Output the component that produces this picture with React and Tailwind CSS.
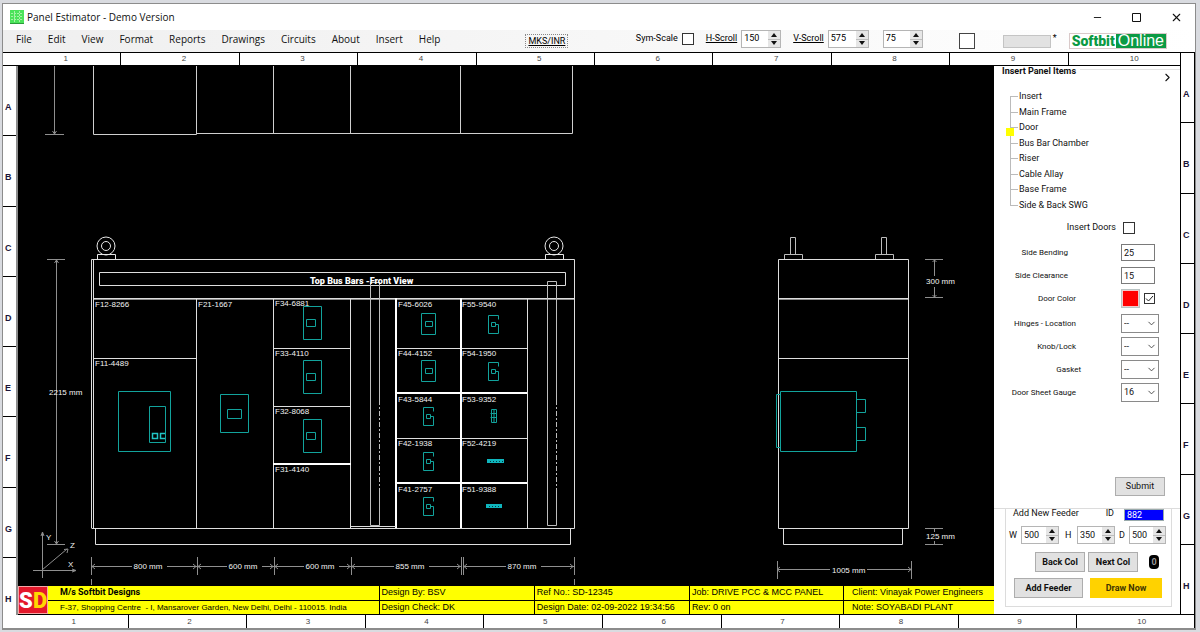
import React, { useState } from 'react';
import { ChevronDown, ChevronRight, Minus, X } from 'lucide-react';

const menuItems = ['File', 'Edit', 'View', 'Format', 'Reports', 'Drawings', 'Circuits', 'About', 'Insert', 'Help'];
const columns = [1, 2, 3, 4, 5, 6, 7, 8, 9, 10];
const rows = ['A', 'B', 'C', 'D', 'E', 'F', 'G', 'H'];
const treeItems = ['Insert', 'Main Frame', 'Door', 'Bus Bar Chamber', 'Riser', 'Cable Allay', 'Base Frame', 'Side & Back SWG'];

// Feeder labels on the front view
const feeders = [
  ['F12-8266', 95, 307],
  ['F11-4489', 95, 366],
  ['F21-1667', 198, 307],
  ['F34-6881', 275, 306],
  ['F33-4110', 275, 356],
  ['F32-8068', 275, 414],
  ['F31-4140', 275, 472],
  ['F45-6026', 398, 307],
  ['F44-4152', 398, 356],
  ['F43-5844', 398, 402],
  ['F42-1938', 398, 446],
  ['F41-2757', 398, 492],
  ['F55-9540', 462, 307],
  ['F54-1950', 462, 356],
  ['F53-9352', 462, 402],
  ['F52-4219', 462, 446],
  ['F51-9388', 462, 492],
];

const bottomDims = [
  ['800 mm', 91, 197, 148],
  ['600 mm', 197, 274, 243],
  ['600 mm', 274, 351, 320],
  ['855 mm', 351, 461, 410],
  ['870 mm', 463, 574, 522],
];

function Spinner({ id, value, className = '' }) {
  return (
    <div className={`flex h-[18px] items-stretch border border-[#b5b5b5] bg-white ${className}`}>
      <input
        id={id}
        aria-label={id}
        type="text"
        inputMode="numeric"
        defaultValue={value}
        className="w-full min-w-0 flex-1 bg-transparent pl-0.5 text-[9px] outline-none"
      />
      <div className="flex w-3 flex-col bg-[#e6e6e6]">
        <button type="button" aria-label="Increase" className="flex flex-1 items-center justify-center border-b border-[#bdbdbd]">
          <svg width="6" height="4" viewBox="0 0 6 4"><path d="M0 4 3 0l3 4z" fill="#111" /></svg>
        </button>
        <button type="button" aria-label="Decrease" className="flex flex-1 items-center justify-center">
          <svg width="6" height="4" viewBox="0 0 6 4"><path d="M0 0h6L3 4z" fill="#111" /></svg>
        </button>
      </div>
    </div>
  );
}

function SelectBox({ id, options }) {
  return (
    <div className="grid w-[38px] items-center">
      <select
        id={id}
        className="col-start-1 row-start-1 h-[19px] w-full appearance-none border border-[#8a8a8a] bg-white pl-0.5 text-[9px] outline-none"
      >
        {options.map((option) => (
          <option key={option}>{option}</option>
        ))}
      </select>
      <ChevronDown size={11} strokeWidth={2} className="pointer-events-none col-start-1 row-start-1 mr-0.5 justify-self-end text-[#444]" />
    </div>
  );
}

function FormRow({ id, label, labelClass, children }) {
  return (
    <div className="flex h-[23px] items-center">
      <label htmlFor={id} className={`w-[127px] whitespace-nowrap text-right text-[8px] ${labelClass}`}>{label}</label>
      {children}
    </div>
  );
}

function TitleBar() {
  return (
    <header className="flex h-[26px] items-center bg-white pl-[7px]">
      <svg width="14" height="14" viewBox="0 0 14 14">
        <rect width="14" height="14" fill="#4be35a" />
        <path d="M1 3.5h12M1 6.5h12M1 9.5h12M4.5 1v12M9.5 1v12" stroke="#a5f2a5" strokeDasharray="2 1" />
        <path d="M0 13.5h14" stroke="#2b9a3a" />
      </svg>
      <h1 className="ml-[3px] font-['Open_Sans',sans-serif] text-[10px] text-[#111]">Panel Estimator - Demo Version</h1>
      <div className="ml-auto flex items-center gap-7 pr-3 text-[#111]">
        <button type="button" aria-label="Minimize"><Minus size={11} strokeWidth={2} /></button>
        <button type="button" aria-label="Maximize">
          <svg width="11" height="11" viewBox="0 0 11 11"><path d="M1.5 1.5h8v8h-8z" fill="none" stroke="currentColor" /></svg>
        </button>
        <button type="button" aria-label="Close"><X size={13} strokeWidth={2} /></button>
      </div>
    </header>
  );
}

function Toolbar() {
  return (
    <div className="flex h-[22px] items-center bg-gradient-to-r from-[#efefef] to-white pb-1 pl-[13px] pr-7">
      <nav className="flex gap-4 font-['Open_Sans',sans-serif] text-[10px] text-[#111]">
        {menuItems.map((item) => (
          <button type="button" key={item}>{item}</button>
        ))}
      </nav>
      <button type="button" className="ml-[85px] mt-1 h-[14px] border border-dotted border-[#888] px-0.5 font-['Roboto',sans-serif] text-[9px] leading-[12px] underline">MKS/INR</button>
      <div className="ml-auto flex items-center whitespace-nowrap font-['Roboto',sans-serif] text-[9px]">
        <label htmlFor="sym-scale">Sym-Scale</label>
        <input id="sym-scale" type="checkbox" className="ml-1 size-3 appearance-none border border-[#333] bg-white" />
        <label htmlFor="h-scroll" className="ml-3 underline">H-Scroll</label>
        <Spinner id="h-scroll" value="150" className="ml-1 w-10" />
        <label htmlFor="v-scroll" className="ml-3 underline">V-Scroll</label>
        <Spinner id="v-scroll" value="575" className="ml-1 w-[41px]" />
        <Spinner id="zoom" value="75" className="ml-3.5 w-10" />
        <input aria-label="Show grid" type="checkbox" className="ml-9 mt-1 size-4 appearance-none border border-[#444] bg-white" />
        <input aria-label="Code" type="text" className="ml-7 mt-1 h-[13px] w-12 border border-[#c4c4c4] bg-[#e2e2e2]" />
        <span className="ml-0.5">*</span>
        <a href="#softbit" className="ml-3 mt-1 flex h-4 items-center border border-[#d9c9c9] bg-white text-[14px] leading-none">
          <span className="pl-0.5 pr-px font-black text-[#0b9a44]">Softbit</span>
          <span className="flex h-full items-center bg-[#0b9a44] px-0.5 font-['Liberation_Sans',sans-serif] text-[16px] text-white">Online</span>
        </a>
      </div>
    </div>
  );
}

function Eyebolt({ x }) {
  return (
    <g fill="none" stroke="#e8e8e8">
      <circle cx={x} cy="246" r="9" />
      <circle cx={x} cy="246" r="4.5" />
      <path d={`M${x - 8.5} 259v-4.5h18v4.5`} />
    </g>
  );
}

function Drawing() {
  return (
    <svg className="block min-h-0 w-full flex-1 bg-black" fontSize="8" fill="#f2f2f2">
      <g transform="translate(-18 -66)">
        {/* Top view */}
        <g fill="none" stroke="#cfcfcf">
          <path d="M93.5 65V134.5H196.5V65M196.5 133.5H572.5V65M273.5 65V134M350.5 65V134M460.5 65V134" />
          <path d="M54.5 65V134M45 134.5H64" stroke="#8f8f8f" />
          <path d="m52.5 131 2 3 2-3" stroke="#8f8f8f" />
        </g>

        {/* Front view */}
        <Eyebolt x={106} />
        <Eyebolt x={554} />
        <g fill="none" stroke="#dedede">
          <path d="M91.5 528V259.5H574.5V528.5H91.5M93.5 259V528" />
          <path d="M99.5 272.5H565.5V285.5H99.5zM94 298.5H574" />
          <path d="M94 299.5H574" stroke="#8a8a8a" />
          <path d="M95.5 528V544.5H570.5V528" />
          <path d="M196.5 299V528M273.5 298V528M350.5 298V528M527.5 299V528M94 358.5H196M273 348.5H351M273 406.5H351M396 348.5H527M396 438.5H527" />
          <path d="M396 298V528M461 298V528M273 464H351M396 393H527M396 483H527" stroke="#fff" strokeWidth="2" />
          <path d="M351 526.5H396" />
          <path d="M379.5 400V282.5H370.5V525.5H379.5V488M556.5 400V281.5H547.5V525.5H556.5V488" stroke="#bdbdbd" />
          <path d="M379.5 400V488M556.5 400V488" stroke="#bdbdbd" strokeDasharray="5 2 2 2" />
        </g>
        <text x="310" y="284" fontSize="9" fill="#fff" className="font-['Roboto',sans-serif] font-black">Top Bus Bars -Front View</text>
        {feeders.map(([name, x, y]) => (
          <text key={name} x={x} y={y}>{name}</text>
        ))}

        {/* Switchgear */}
        <g fill="none" stroke="#12a39c">
          <path d="M118.5 391.5H170.5V451.5H118.5zM149.5 406.5H165.5V442.5H149.5z" />
          <path d="M152.5 433.5h5v5h-5zM165 433.5h-4.5v5h4.5" stroke="#22c4c4" strokeWidth="1.5" />
          <path d="M220.5 394.5H248.5V432.5H220.5zM227.5 409.5H241.5V418.5H227.5z" />
          {[306.5, 360.5, 419.5].map((y) => (
            <path key={y} d={`M303.5 ${y}h18v33h-18zM306.5 ${y + 13}h9v7h-9z`} />
          ))}
          {[313.5, 360.5].map((y) => (
            <path key={y} d={`M421.5 ${y}h14v21h-14zM425.5 ${y + 8}h7v5h-7z`} />
          ))}
          {[[423.5, 407.5], [423.5, 452.5], [423.5, 497.5], [488.5, 315.5], [488.5, 362.5]].map(([x, y]) => (
            <path key={`${x}-${y}`} d={`M${x + 10} ${y + 4}v-4h-10v18h10v-9h-3M${x + 7} ${y + 7}h-4v4h4z`} />
          ))}
          <path d="M491.5 409.5h5v13h-5zM494 409v13M490.5 413.5h6M490.5 417.5h6" />
          <path d="M487 461H504M486 506H502" stroke="#0fb5bd" strokeWidth="4" />
          <path d="M490 461.5h13M489 506.5h12" stroke="#063c40" strokeDasharray="1 2" />
        </g>

        {/* Side view */}
        <g fill="none" stroke="#dedede">
          <path d="M778.5 259.5H908.5V528.5H778.5zM779 298.5H908M779 358.5H908M783.5 528V544.5H902.5V528" />
          <path d="M779 299.5H908" stroke="#8a8a8a" />
          <path d="M784.5 259V254.5H802.5V259M790.5 254V237.5H795.5V254M875.5 259V254.5H893.5V259M881.5 254V237.5H886.5V254" stroke="#bdbdbd" />
        </g>
        <g fill="none" stroke="#12a39c">
          <path d="M780.5 391.5H856.5V451.5H780.5zM856 399.5H865.5V412.5H856M856 427.5H865.5V440.5H856" />
          <path d="M780 394.5H776.5V447.5H780" />
        </g>

        {/* Dimension lines */}
        <g fill="none" stroke="#8f8f8f">
          <path d="M56.5 260V544M47 259.5H65M47 544.5H65M54.5 541l2 3 2-3M54.5 263l2-3 2 3" />
          <path d="M934.5 260V276M934.5 287V297M925 259.5H943M925 297.5H943M925 528.5H943M925 544.5H943M934.5 529v3M934.5 541v3" />
          <path d="m932.5 262 2-2 2 2m-4 33 2 2 2-2" />
          <path d="M777 569.5H830M867 569.5H911M777.5 561V579M911.5 561V579" />
          <path d="m780 567-3 2.5 3 2.5m128-5 3 2.5-3 2.5" />
          <path d="M91.5 557V575M197.5 557V575M274.5 557V575M351.5 557V575M461.5 557V575M463.5 557V575M574.5 557V575M91.5 579V586M574.5 579V586" />
          {bottomDims.map(([, from, to, mid]) => (
            <path key={from} d={`M${from} 566.5H${mid - 16}M${mid + 19} 566.5H${to}M${from + 4} 564l-3 2.5 3 2.5M${to - 4} 564l3 2.5-3 2.5`} />
          ))}
          <path d="M42.5 533V578M33 570.5H75M42 570 67 549M41 536l1.5-4 1.5 4M72 569l4 1.5-4 1.5M64 549.5l4-.5-1 4" />
          <path d="M286 585.5H302" strokeDasharray="3 2" />
        </g>
        {bottomDims.map(([name, from, , mid]) => (
          <text key={from} x={mid} y="569" textAnchor="middle">{name}</text>
        ))}
        <text x="49" y="395">2215 mm</text>
        <text x="926" y="284">300 mm</text>
        <text x="926" y="539">125 mm</text>
        <text x="832" y="573">1005 mm</text>
        <text x="46" y="540">Y</text>
        <text x="70" y="548">Z</text>
        <text x="68" y="567">X</text>
      </g>
    </svg>
  );
}

function TitleBlock() {
  return (
    <div className="flex h-[30px] border-y border-black bg-[#ffff00] text-[9px]">
      <svg width="30" height="28" viewBox="0 0 30 28" className="shrink-0 font-['Roboto',sans-serif] font-black">
        <rect width="30" height="28" fill="#f7a6a6" />
        <rect x="1" y="1" width="28" height="26" fill="#e3182b" />
        <text x="1" y="22" fontSize="22" fill="#fff">S</text>
        <text x="15" y="22" fontSize="22" fill="#ffd800">D</text>
      </svg>
      <table className="w-full table-fixed whitespace-nowrap text-left leading-[13px]">
        <colgroup>
          <col className="w-[35%]" />
          <col className="w-[16.4%]" />
          <col className="w-[16.4%]" />
          <col className="w-[16.3%]" />
          <col />
        </colgroup>
        <tbody>
          <tr className="border-b border-black">
            <th className="pl-3 font-['Roboto',sans-serif] font-bold">M/s Softbit Designs</th>
            <td className="border-l border-black pl-0.5">Design By: BSV</td>
            <td className="border-l border-black pl-0.5">Ref No.: SD-12345</td>
            <td className="border-l border-black pl-0.5">Job: DRIVE PCC &amp; MCC PANEL</td>
            <td className="border-l border-black pl-2">Client: Vinayak Power Engineers</td>
          </tr>
          <tr>
            <td className="pl-3 text-[8px]">F-37, Shopping Centre &nbsp;- I, Mansarover Garden, New Delhi, Delhi - 110015. India</td>
            <td className="border-l border-black pl-0.5">Design Check: DK</td>
            <td className="border-l border-black pl-0.5">Design Date: 02-09-2022 19:34:56</td>
            <td className="border-l border-black pl-0.5">Rev: 0 on</td>
            <td className="border-l border-black pl-2">Note: SOYABADI PLANT</td>
          </tr>
        </tbody>
      </table>
    </div>
  );
}

function FeederPanel() {
  return (
    <section className="border-t border-[#dcdcdc] pl-[11px] pr-2">
      <div className="border-x border-b border-[#dcdcdc] pb-2 text-[9px]">
        <div className="flex h-[13px] items-start overflow-hidden pl-[7px] pr-[7px] leading-[9px]">
          <span>Add New Feeder</span>
          <label htmlFor="feeder-id" className="ml-auto">ID</label>
          <input id="feeder-id" defaultValue="882" className="ml-2.5 h-3 w-10 border border-[#9aa] bg-[#0000ff] pl-0.5 text-[9px] leading-[9px] text-white" />
        </div>
        <div className="mt-1 flex items-center pl-[3px]">
          <label htmlFor="width" className="w-3">W</label>
          <Spinner id="width" value="500" className="w-[38px]" />
          <label htmlFor="height" className="ml-1.5 w-3">H</label>
          <Spinner id="height" value="350" className="w-[38px]" />
          <label htmlFor="depth" className="ml-1 w-2.5">D</label>
          <Spinner id="depth" value="500" className="w-[37px]" />
        </div>
        <div className="mt-2 flex items-center gap-[3px] pl-[29px] font-bold">
          <button type="button" className="h-5 w-[50px] whitespace-nowrap border border-[#adadad] bg-[#e1e1e1]">Back Col</button>
          <button type="button" className="h-5 w-[50px] whitespace-nowrap border border-[#adadad] bg-[#e1e1e1]">Next Col</button>
          <span className="ml-2 flex h-3.5 w-2.5 items-center justify-center rounded bg-black text-[#999]">0</span>
        </div>
        <div className="mt-1.5 flex items-center gap-[7px] pl-2 font-bold">
          <button type="button" className="h-5 w-[69px] border border-[#adadad] bg-[#e1e1e1]">Add Feeder</button>
          <button type="button" className="h-5 w-[72px] bg-[#ffd200] text-[#3f3500]">Draw Now</button>
        </div>
      </div>
    </section>
  );
}

function SidePanel() {
  const [selected, setSelected] = useState('Door');

  return (
    <aside className="flex min-h-0 flex-col border-b border-black bg-white pb-[7px] font-['Roboto',sans-serif] text-[9px] text-[#111]">
      <div className="flex h-[11px] items-center gap-1 pl-2">
        <h2 className="font-bold">Insert Panel Items</h2>
        <span className="mb-1 flex-1 border-t border-[#e4e4e4]" />
      </div>
      <button type="button" aria-label="Collapse panel" className="-mt-1.5 mr-1.5 self-end">
        <ChevronRight size={13} strokeWidth={2} />
      </button>

      <ul className="ml-4 mt-[5px] grid h-[124px] grid-rows-8">
        {treeItems.map((item) => (
          <li key={item} className="group relative flex items-center">
            <span className="h-full w-2 border-l border-[#bbb] group-first:h-1/2 group-first:self-end group-last:h-1/2 group-last:self-start" />
            <span className="-ml-2 mr-px w-2 border-t border-[#bbb]" />
            {item === selected && <span className="absolute -left-1 top-2 size-2 bg-[#ffff00]" />}
            <button type="button" onClick={() => setSelected(item)}>{item}</button>
          </li>
        ))}
      </ul>

      <form className="flex flex-1 flex-col" onSubmit={(e) => e.preventDefault()}>
        <div className="mt-[3px] mb-0.5 flex h-[23px] items-center">
          <label htmlFor="insert-doors" className="w-[122px] text-right">Insert Doors</label>
          <input id="insert-doors" type="checkbox" className="ml-[7px] size-3 appearance-none border border-[#333]" />
        </div>
        <FormRow id="side-bending" label="Side Bending" labelClass="pr-[53px]">
          <input id="side-bending" defaultValue="25" className="h-[17px] w-[34px] border border-[#7a7a7a] pl-0.5" />
        </FormRow>
        <FormRow id="side-clearance" label="Side Clearance" labelClass="pr-[53px]">
          <input id="side-clearance" defaultValue="15" className="h-[17px] w-[34px] border border-[#7a7a7a] pl-0.5" />
        </FormRow>
        <FormRow id="door-color" label="Door Color" labelClass="pr-[45px]">
          <button type="button" aria-label="Pick color" className="size-[19px] border border-[#b9c4c4] bg-[#ff0000] outline-1 -outline-offset-2 outline-[#f3c9c9]" />
          <span className="ml-1 grid size-[11px] items-center justify-items-center">
            <input id="door-color" type="checkbox" defaultChecked className="col-start-1 row-start-1 size-[11px] appearance-none border border-[#333]" />
            <svg width="9" height="9" viewBox="0 0 9 9" className="pointer-events-none col-start-1 row-start-1">
              <path d="m1 4.5 2.5 2.5L8 2" fill="none" stroke="#222" />
            </svg>
          </span>
        </FormRow>
        <div className="mt-0.5">
          <FormRow id="hinges" label="Hinges - Location" labelClass="pr-[45px]">
            <SelectBox id="hinges" options={['--', 'Left', 'Right']} />
          </FormRow>
          <FormRow id="knob" label="Knob/Lock" labelClass="pr-[45px]">
            <SelectBox id="knob" options={['--', 'Knob', 'Lock']} />
          </FormRow>
          <FormRow id="gasket" label="Gasket" labelClass="pr-10">
            <SelectBox id="gasket" options={['--', 'Yes', 'No']} />
          </FormRow>
          <FormRow id="gauge" label="Door Sheet Gauge" labelClass="pr-[45px]">
            <SelectBox id="gauge" options={['16', '14', '18']} />
          </FormRow>
        </div>
        <button type="submit" className="mb-3 mr-[15px] mt-auto h-[19px] w-[50px] self-end border border-[#adadad] bg-[#e1e1e1]">Submit</button>
      </form>

      <FeederPanel />
    </aside>
  );
}

export default function App() {
  return (
    <div className="flex h-screen flex-col bg-[#d9dbe0] pb-0.5 pl-0.5 pr-1 pt-[3px] font-['Liberation_Sans',Arial,sans-serif] text-black">
      <div className="flex min-h-0 flex-1 flex-col border border-b-2 border-[#8c8c8c] bg-white">
        <TitleBar />
        <Toolbar />
        <main className="grid min-h-0 flex-1 grid-cols-[13px_minmax(0,1fr)_186px_15px] grid-rows-[13px_minmax(0,1fr)_13px] border-t border-black text-[8px] leading-none">
          {/* Top ruler */}
          <div className="col-span-3 grid grid-cols-[repeat(9,118fr)_111fr] border-b border-black">
            {columns.map((n) => (
              <span key={n} className="flex items-center justify-center border-r border-black pl-2 text-[#444] last:border-r-0 last:pl-5">{n}</span>
            ))}
          </div>
          {/* Right ruler */}
          <div className="col-start-4 row-span-2 row-start-1 grid grid-rows-8 border-r border-black">
            {rows.map((r) => (
              <span key={r} className="flex items-center border-b border-l border-black pl-0.5 pt-3.5 text-[9px] font-bold text-[#1c1438]">{r}</span>
            ))}
          </div>
          {/* Left ruler */}
          <div className="col-start-1 row-span-2 row-start-2 grid grid-rows-8">
            {rows.map((r) => (
              <span key={r} className="flex items-center border-b border-black pl-0.5 pt-3.5 text-[9px] font-bold text-[#1c1438] last:border-b-0">{r}</span>
            ))}
          </div>
          <section className="col-start-2 row-start-2 flex min-h-0 flex-col border-l-2 border-[#8c8c8c]">
            <Drawing />
            <TitleBlock />
          </section>
          <SidePanel />
          {/* Bottom ruler */}
          <div className="col-span-3 col-start-2 row-start-3 grid grid-cols-[112fr_repeat(8,118fr)_117fr]">
            {columns.map((n) => (
              <span key={n} className="flex items-center justify-center border-r border-black pl-1 text-[#444] last:pl-3">{n}</span>
            ))}
          </div>
        </main>
      </div>
    </div>
  );
}
